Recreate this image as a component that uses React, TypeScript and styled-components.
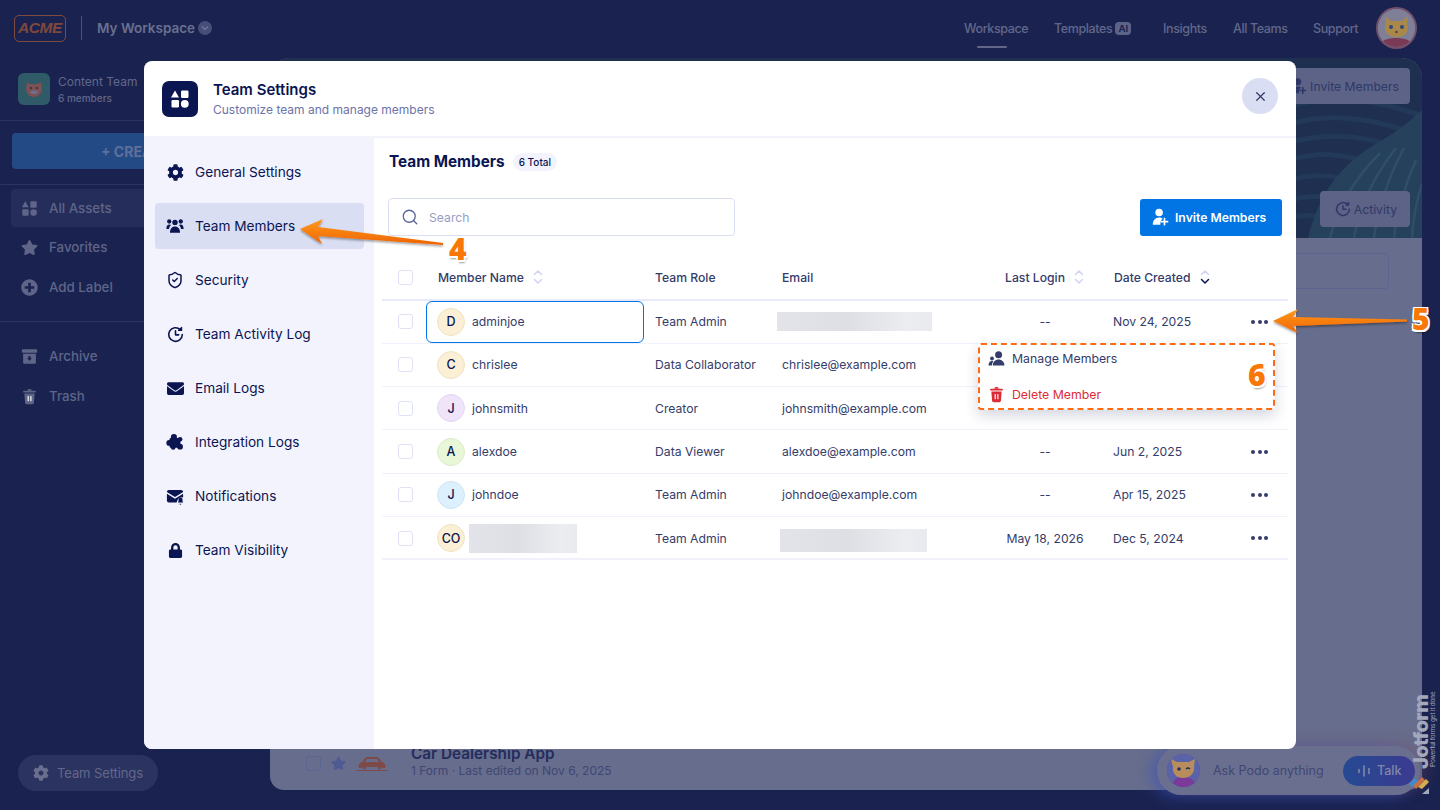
import React from "react";
import styled, { createGlobalStyle } from "styled-components";
import { FaCog, FaEnvelope, FaLock, FaStar, FaPlusCircle } from "react-icons/fa";
import { ShieldCheck, Search as SearchGlyph, X } from "lucide-react";

const Global = createGlobalStyle`
  html, body { margin: 0; padding: 0; height: 100%; background: #1a2350; overflow: hidden; }
  body { font-family: Inter, "Noto Sans", sans-serif; }
  * { box-sizing: border-box; }
`;

/* ---------- dimmed page ---------- */
const Page = styled.div`
  width: 1440px; height: 810px; display: flex; flex-direction: column; overflow: hidden; position: relative;
  background: #1a2350; color: #5f6588;
`;
const TopBar = styled.header`
  height: 58px; flex: none; display: flex; align-items: center; padding: 0 23px 2px 14px;
`;
const Logo = styled.div`
  width: 52px; height: 27px; border: 1.5px solid #7d4a3f; border-radius: 5px; display: flex; align-items: center; justify-content: center;
  color: #80483c; font: italic 900 15.5px "Liberation Sans", sans-serif; letter-spacing: -.4px;
`;
const Rule = styled.span`width: 1px; height: 24px; background: #4a5178; margin: 0 15px;`;
const Workspace = styled.div`font-size: 13.5px; font-weight: 600; color: #6a6f8f; display: flex; align-items: center; gap: 3px;`;
const Caret = styled.span`
  width: 14px; height: 14px; border-radius: 50%; background: #474e78; display: flex; align-items: center; justify-content: center;
`;
const Nav = styled.nav`margin-left: auto; display: flex; align-items: center; height: 56px;`;
const NavLink = styled.a<{ $w: number; $active?: boolean }>`
  width: ${p => p.$w}px; font-size: 12.5px; font-weight: 500; color: #62678a; letter-spacing: -.38px;
  display: flex; align-items: center; gap: 3px; height: 100%; position: relative;
  ${p => p.$active && `&::after{content:"";position:absolute;left:13px;top:46px;width:30px;height:2px;background:#62678a;border-radius:1px;}`}
`;
const AIBadge = styled.span`
  background: #5d6386; color: #1e2654; font-size: 9.5px; font-weight: 700; border-radius: 4px; padding: 1px 3px; line-height: 11px; letter-spacing: 0;
`;
const AvatarRing = styled.div`
  width: 41px; height: 42px; border-radius: 50%; background: #6a6f8f; overflow: hidden; border: 2px solid #75506a; margin-left: 2px;
`;
const Body = styled.div`flex: 1; display: flex; min-height: 0;`;
const Sidebar = styled.aside`width: 270px; flex: none; display: flex; flex-direction: column; padding-bottom: 19px;`;
const TeamCard = styled.div`
  height: 63px; border-bottom: 1px solid #2c3460; display: flex; align-items: flex-start; padding: 15px 18px 0; gap: 8px;
`;
const TeamThumb = styled.div`
  width: 32px; height: 32px; border-radius: 6px; background: #2f5a68; display: flex; align-items: center; justify-content: center;
`;
const TeamName = styled.div`font-size: 12px; line-height: 16px; color: #62678a; margin-top: 1px;`;
const TeamCount = styled.div`font-size: 10px; line-height: 14px; font-weight: 500; color: #62678a; margin-top: 1px;`;
const Create = styled.div`
  margin: 12px 12px 0; height: 36px; border-radius: 4px; background: #244a85; color: #5f6f9b; font-size: 14px; font-weight: 700;
  display: flex; align-items: center; justify-content: center;
`;
const SideRule = styled.div`height: 1px; background: #2c3460; margin-top: 15px;`;
const SideGroup = styled.div`padding: 4px 11px 0; display: flex; flex-direction: column;`;
const SideItem = styled.div<{ $active?: boolean; $h?: number }>`
  height: ${p => p.$h ?? 40}px; padding-left: 10px; display: flex; align-items: center; gap: 11px; font-size: 13.3px; font-weight: 500; color: #5f6588; border-radius: 4px;
  background: ${p => (p.$active ? "#252d5b" : "transparent")};
  svg { flex: none; }
`;
const SideGroupTwo = styled(SideGroup)`padding-top: 14px; border-top: 1px solid #2c3460; margin-top: 14px;`;
const Pill = styled.div`
  margin: auto 0 0 18px; width: 140px; height: 36px; border-radius: 18px; background: #2b3360; display: flex; align-items: center; gap: 8px; padding: 0 0 1px 15px;
  font-size: 13px; color: #62678a; letter-spacing: -.1px;
`;
const Main = styled.main`
  flex: 1; margin: 0 18px 20px 0; border-radius: 20px 20px 14px 14px; background: #676d8c; overflow: hidden; display: flex; flex-direction: column; position: relative;
`;
const Hero = styled.div`height: 180px; flex: none; position: relative; background: #1e2f50; overflow: hidden;`;
const HeroArt = styled.svg`position: absolute; inset: 0; width: 100%; height: 100%;`;
const GhostButton = styled.div<{ $w: number; $top: number; $pad: number }>`
  position: absolute; right: 12px; top: ${p => p.$top}px; width: ${p => p.$w}px; height: 36px; border-radius: 4px; background: #5c6386; white-space: nowrap;
  display: flex; align-items: center; justify-content: flex-end; gap: 3px; font-size: 12.2px; color: #2f3868; padding-right: ${p => p.$pad}px;
`;
const ListBar = styled.div`height: 66px; flex: none; padding: 15px 33px 0 0; display: flex; justify-content: flex-end;`;
const GhostInput = styled.div`width: 400px; height: 36px; border: 1px solid #5c6490; border-radius: 4px;`;
const BottomRow = styled.div`
  margin-top: auto; height: 50px; display: flex; align-items: center; padding: 0 0 4px 36px; gap: 10px;
`;
const GhostCheck = styled.span`width: 15px; height: 15px; border: 1px solid #5c6490; border-radius: 3px;`;
const AppInfo = styled.div`margin-left: 13px;`;
const AppTitle = styled.div`font-size: 15.3px; font-weight: 600; color: #232c5c; line-height: 15px;`;
const AppMeta = styled.div`font-size: 12px; color: #3f4774; line-height: 18px; margin-top: 1px;`;

const Podo = styled.div`
  position: absolute; left: 1157px; top: 746px; width: 263px; height: 49px; border-radius: 25px; background: #6a6f90;
  display: flex; align-items: center; padding-left: 10px;
  box-shadow: -6px 2px 14px rgba(60,80,190,.55), 8px -3px 14px rgba(140,80,90,.3);
`;
const PodoFace = styled.div`width: 33px; height: 33px; border-radius: 50%; background: #5a4aa0; overflow: hidden; flex: none;`;
const PodoText = styled.div`font-size: 12.5px; color: #404873; margin-left: 13px; width: 130px;`;
const Talk = styled.div`
  width: 72px; height: 30px; border-radius: 15px; background: linear-gradient(90deg,#254a92,#3c3a90); display: flex; align-items: center; gap: 7px; padding-left: 15px;
  font-size: 12.5px; font-weight: 500; color: #8088a8;
`;
const Brand = styled.div`
  position: absolute; left: 1408px; top: 690px; width: 30px; height: 105px;
`;
const BrandWord = styled.div`
  position: absolute; left: 5px; top: 79px; transform-origin: left top; transform: rotate(-90deg); font-size: 20px; font-weight: 800; letter-spacing: -.6px; color: #a3a8bb; white-space: nowrap; line-height: 17px;
`;
const BrandTag = styled.div`
  position: absolute; left: 21px; top: 77px; transform-origin: left top; transform: rotate(-90deg); font: 6.5px/8px "Liberation Sans", sans-serif; color: #a3a8bb; white-space: nowrap;
`;
const BrandMark = styled.svg`position: absolute; left: 0; top: 82px;`;

/* ---------- modal ---------- */
const Overlay = styled.div`position: absolute; inset: 0; display: flex; align-items: center; justify-content: center;`;
const Modal = styled.section`
  width: 1152px; height: 688px; background: #fff; border-radius: 8px; overflow: hidden; display: flex; flex-direction: column; color: #0a1551;
`;
const ModalHead = styled.div`
  height: 77px; flex: none; display: flex; align-items: center; padding: 0 18px 2px 18px; border-bottom: 2px solid #f3f3fb;
`;
const HeadIcon = styled.div`
  width: 36px; height: 36px; border-radius: 7px; background: #0a1551; display: flex; align-items: center; justify-content: center; margin: 2px 15px 0 0;
`;
const HeadText = styled.div`flex: 1; padding-top: 3px;`;
const HeadTitle = styled.div`font-size: 15px; font-weight: 600; line-height: 20px; color: #0a1551;`;
const HeadSub = styled.div`font-size: 12px; line-height: 18px; color: #6c73a8; margin-top: 1px;`;
const Close = styled.button`
  width: 36px; height: 36px; border-radius: 50%; border: 0; background: #dadef3; color: #343c6a; display: flex; align-items: center; justify-content: center; padding: 0; margin-bottom: 3px;
`;
const ModalBody = styled.div`flex: 1; display: flex; min-height: 0;`;
const Menu = styled.nav`width: 230px; flex: none; background: #f3f3fe; padding: 11px 10px 0 11px; display: flex; flex-direction: column;`;
const MenuItem = styled.div<{ $active?: boolean }>`
  height: 46px; margin-bottom: 8px; border-radius: 4px; display: flex; align-items: center; padding-left: 11px; gap: 11px;
  font-size: 13.65px; color: #0a1551;
  background: ${p => (p.$active ? "#dadef3" : "transparent")};
`;
const MenuIcon = styled.span`width: 18px; height: 18px; display: flex; align-items: center; justify-content: center; flex: none; color: #0a1551;`;
const Content = styled.div`flex: 1; padding: 0 8px; display: flex; flex-direction: column; min-width: 0;`;
const TitleRow = styled.div`height: 48px; padding: 0 0 1px 7px; display: flex; align-items: center; gap: 8px;`;
const ContentTitle = styled.h2`margin: 0; font-size: 15.3px; font-weight: 700; color: #0a1551;`;
const TotalBadge = styled.span`
  height: 18px; padding: 0 6px; border-radius: 9px; background: #f3f3fe; font-size: 10px; font-weight: 500; color: #0a1551; display: flex; align-items: center;
`;
const Toolbar = styled.div`height: 38px; margin-top: 12px; padding: 0 6px; display: flex; justify-content: space-between; align-items: center;`;
const SearchBox = styled.div`
  width: 347px; height: 38px; border: 1px solid #dadef3; border-radius: 4px; display: flex; align-items: center; padding-left: 12px; gap: 10px;
  font-size: 12.2px; color: #979dc6;
`;
const InviteButton = styled.button`
  width: 142px; height: 37px; border: 0; border-radius: 3px; background: #0075e3; color: #fff; display: flex; align-items: center; padding-left: 11px; gap: 6px;
  font: 600 12.2px Inter, sans-serif;
`;
const Table = styled.div`margin-top: 22px; display: flex; flex-direction: column; position: relative;`;
const columns = "44px 218px 127px 213px 122px 130px 52px";
const HeadRow = styled.div`
  display: grid; grid-template-columns: ${columns}; height: 42.5px; padding-bottom: 2px; align-items: center; border-bottom: 2px solid #e8eafb; font-size: 12.2px; font-weight: 500; color: #343c6a;
`;
const Row = styled.div`
  display: grid; grid-template-columns: ${columns}; height: 43.33px; align-items: center; border-bottom: 1px solid #f0f1fb; font-size: 12.2px; color: #343c6a;
  &:nth-child(7) { border-bottom-width: 2px; }
`;
const CheckCell = styled.div`padding-left: 16px; display: flex;`;
const Check = styled.span`width: 15px; height: 15px; border: 1.5px solid #dfe1f6; border-radius: 3px; display: block;`;
const HeadCell = styled.div<{ $pad?: number }>`padding-left: ${p => p.$pad ?? 0}px; display: flex; align-items: center; gap: 9px;`;
const NameCell = styled.div<{ $focus?: boolean }>`
  height: 42px; display: flex; align-items: center; padding-left: 10px; gap: 7px; border-radius: 6px;
  border: 1px solid ${p => (p.$focus ? "#0075e3" : "transparent")}; color: #343c6a;
`;
const Avatar = styled.span<{ $bg: string; $edge: string }>`
  width: 28px; height: 28px; border-radius: 50%; background: ${p => p.$bg}; border: 1px solid ${p => p.$edge}; color: #0a1551; flex: none;
  display: flex; align-items: center; justify-content: center; font-size: 12.5px; font-weight: 500;
`;
const Cell = styled.div<{ $pad?: number }>`padding-left: ${p => p.$pad ?? 0}px;`;
const CenterCell = styled.div`text-align: center; color: #343c6a;`;
const Blur = styled.span<{ $w: number; $h: number; $shift?: number; $drop?: number }>`
  display: block; width: ${p => p.$w}px; height: ${p => p.$h}px; margin-left: ${p => p.$shift ?? 0}px; margin-top: ${p => p.$drop ?? 0}px;
  background: linear-gradient(90deg,#e3e4e9,#dedfe4 45%,#ecedf1 85%,#e9eaef);
`;
const Dots = styled.div`padding-left: 15px; display: flex; gap: 2.5px; span{width:4px;height:4px;border-radius:50%;background:#343c6a;display:block;}`;
const Dropdown = styled.div`
  position: absolute; left: 596px; top: 85px; width: 297px; height: 67px; background: #fff; border: 2px dashed #ff6a13; border-radius: 3px;
  box-shadow: 0 6px 14px rgba(30,40,90,.18); display: flex; flex-direction: column; padding: 0 8px;
`;
const DropItem = styled.div<{ $danger?: boolean }>`
  height: 36px; flex: none; display: flex; align-items: center; gap: 7px; font-size: 12.3px; color: ${p => (p.$danger ? "#dc2b35" : "#343c6a")};
  &:first-child { margin-top: -5px; }
`;

/* ---------- annotations ---------- */
const Marks = styled.svg`position: absolute; inset: 0; width: 1440px; height: 810px; pointer-events: none;`;
const Step = styled.div<{ $x: number; $y: number }>`
  position: absolute; left: ${p => p.$x}px; top: ${p => p.$y}px; color: #f97706; font: 800 30px/28px "Open Sans", sans-serif;
  text-shadow: 0 0 1px #fff, 1.5px 1.5px 0 #fff, -1.5px -1.5px 0 #fff, 1.5px -1.5px 0 #fff, -1.5px 1.5px 0 #fff, 1px 2.5px 2px rgba(0,0,0,.4);
`;

/* ---------- drawings ---------- */
const Shapes = ({ size, color }: { size: number; color: string }) => (
  <svg width={size} height={size} viewBox="0 0 20 20" fill={color}>
    <path d="M5 1.5 9 8.5H1z" />
    <rect x="11" y="1.5" width="7.5" height="7.5" rx="1.2" />
    <rect x="1.5" y="11" width="7.5" height="7.5" rx="1.2" />
    <circle cx="14.8" cy="14.8" r="3.9" />
  </svg>
);
const ClockBack = ({ size, color }: { size: number; color: string }) => (
  <svg width={size} height={size} viewBox="0 0 20 20" fill="none" stroke={color} strokeWidth="1.9" strokeLinecap="round" strokeLinejoin="round">
    <path d="M18 10a8 8 0 1 1-2.4-5.7" />
    <path d="M17.2 1.6v3.6h-3.6z" fill={color} strokeWidth="1.4" />
    <path d="M10 5.8v4.6h3.8" />
  </svg>
);
const Trash = ({ color, size }: { color: string; size: number }) => (
  <svg width={size} height={size} viewBox="0 0 20 20" fill={color}>
    <rect x="2.5" y="3.2" width="15" height="2.2" rx="1" />
    <path d="M7.5 3.2C7.5 1.8 8.4 1.2 10 1.2s2.5.6 2.5 2z" />
    <path d="M4 6.4h12l-.8 11c-.1 1-.8 1.6-1.7 1.6h-7c-.9 0-1.6-.6-1.7-1.6z" />
    <rect x="7.7" y="9.5" width="1.6" height="6" fill="#fff" opacity=".85" />
    <rect x="10.8" y="9.5" width="1.6" height="6" fill="#fff" opacity=".85" />
  </svg>
);
const Archive = () => (
  <svg width="17" height="17" viewBox="0 0 20 20" fill="#5f6588">
    <rect x="1" y="1.5" width="18" height="4" rx="1" />
    <path d="M2.5 6.8h15V17a1.5 1.5 0 0 1-1.5 1.5H4A1.5 1.5 0 0 1 2.5 17z" />
    <path d="M8.8 9.5h2.4v2.5H13l-3 3-3-3h1.8z" fill="#1a2350" />
  </svg>
);
const PersonPlus = ({ color }: { color: string }) => (
  <svg width="18" height="18" viewBox="0 0 20 20" fill={color}>
    <circle cx="9" cy="5" r="4.2" />
    <path d="M2 18.6c0-4.8 2.8-8 7-8 1.6 0 3 .5 4 1.3-1.6.8-2.6 2.6-2.6 6.7z" />
    <path d="M15 11.8v6.8M11.8 15.2h6.6" stroke={color} strokeWidth="1.9" strokeLinecap="round" />
  </svg>
);
const Notify = () => (
  <svg width="18" height="18" viewBox="0 0 20 20" fill="#0a1551">
    <path d="M1 5.5C1 4 2 3.2 3.2 3.2h13.6C18 3.2 19 4 19 5.5L10 11z" />
    <path d="M1 7.6l9 5.4 9-5.4v4.2a5 5 0 0 0-6.4 3.2c-.4 1-.4 1.6-.9 2.2H3.2C2 17.2 1 16.2 1 15z" />
    <path d="M16 11.8c1.6 0 2.4 1.1 2.4 2.5v1.8l.9 1H13l.9-1v-1.9c0-1.4.7-2.4 2.1-2.4zM15 18.6h2c0 .6-.4 1-1 1s-1-.4-1-1z" />
  </svg>
);
const Group = () => (
  <svg width="18" height="18" viewBox="0 0 20 20" fill="#0a1551">
    <circle cx="10" cy="6" r="3" />
    <circle cx="3.6" cy="5" r="2.4" />
    <circle cx="16.4" cy="5" r="2.4" />
    <path d="M4.4 17.6c0-4.4 2.1-7 5.6-7s5.6 2.6 5.6 7z" />
    <path d="M.4 13.4c0-3 1-5 3.3-5 .8 0 1.4.2 1.9.6-1.3 1-2 2.6-2.3 4.4z" />
    <path d="M19.6 13.4c0-3-1-5-3.3-5-.8 0-1.4.2-1.9.6 1.3 1 2 2.6 2.3 4.4z" />
  </svg>
);
const Puzzle = () => (
  <svg width="18" height="18" viewBox="0 0 20 20" fill="#0a1551">
    <rect x="4" y="5.5" width="12" height="11" rx="1.5" />
    <circle cx="8.8" cy="4.4" r="3.4" />
    <circle cx="3.6" cy="11" r="3.2" />
    <circle cx="15.6" cy="7" r="2.6" />
    <circle cx="15.6" cy="15.2" r="3.2" />
    <circle cx="8" cy="16" r="2.6" />
  </svg>
);
const TwoPeople = () => (
  <svg width="17" height="15" viewBox="0 0 20 18" fill="#343c6a">
    <circle cx="12.5" cy="4.4" r="4.2" />
    <path d="M5.5 17.5c0-4.4 3-7.3 7-7.3s7 2.9 7 7.3z" />
    <circle cx="4.6" cy="9" r="2.3" />
    <path d="M.4 17.5c0-3 1.5-5.4 4.2-5.4.7 0 1.2.1 1.6.4-1 1.3-1.7 3-1.7 5z" />
  </svg>
);
const Sort = ({ down }: { down?: boolean }) => (
  <svg width="10" height="16" viewBox="0 0 10 16" fill="none" strokeWidth="1.5" strokeLinecap="round" strokeLinejoin="round">
    <path d="M1.5 5.5 5 2l3.5 3.5" stroke="#cfd3f2" />
    <path d="M1.5 10.5 5 14l3.5-3.5" stroke={down ? "#0a1551" : "#cfd3f2"} />
  </svg>
);
const Tiger = () => (
  <svg width="20" height="20" viewBox="0 0 20 20">
    <path d="M3 3l3 2h8l3-2 1 7c0 4-3 8-8 8s-8-4-8-8z" fill="#7b5153" />
    <path d="M6 13c1-2 7-2 8 0-1 3-7 3-8 0z" fill="#6d6f8e" />
    <circle cx="7" cy="9" r="1" fill="#2b2b45" /><circle cx="13" cy="9" r="1" fill="#2b2b45" />
  </svg>
);
const CatFace = () => (
  <svg width="37" height="38" viewBox="2 2 37 38">
    <rect width="41" height="42" fill="#7f8098" />
    <path d="M3 42c1-9 8-11 17-11s17 2 18 11z" fill="#7a3a55" />
    <path d="M9 9l6 5h11l6-5-1 9c2 3 1 12-10.500 12S8 21 10 18z" fill="#a8894a" />
    <circle cx="15" cy="20" r="2" fill="#36457a" /><circle cx="26" cy="20" r="2" fill="#36457a" />
    <circle cx="20.500" cy="25" r="1.300" fill="#6b3a3a" />
  </svg>
);
const PodoCat = () => (
  <svg width="33" height="33" viewBox="0 0 33 33">
    <rect width="33" height="33" fill="#5a62a8" />
    <path d="M5 33c1-8 5-10 11-10s12 2 13 10z" fill="#7a3a9a" />
    <path d="M4 5l6 3h12l6-3-1 8c1 6-4 11-11 11S5 19 6 13z" fill="#b78d5d" />
    <circle cx="12" cy="15" r="1.800" fill="#27305c" />
    <path d="M19 15q2-2 4 0" stroke="#27305c" strokeWidth="1.200" fill="none" />
  </svg>
);

const menu: { label: string; icon: React.ReactNode; active?: boolean }[] = [
  { label: "General Settings", icon: <FaCog size={17} /> },
  { label: "Team Members", icon: <Group />, active: true },
  { label: "Security", icon: <ShieldCheck size={18} strokeWidth={2} /> },
  { label: "Team Activity Log", icon: <ClockBack size={17} color="#0a1551" /> },
  { label: "Email Logs", icon: <FaEnvelope size={17} /> },
  { label: "Integration Logs", icon: <Puzzle /> },
  { label: "Notifications", icon: <Notify /> },
  { label: "Team Visibility", icon: <FaLock size={15} /> },
];

type Member = {
  initial: string; bg: string; edge: string; name?: string; role: string; email?: string;
  login?: string; date?: string; nameBlur?: boolean; focus?: boolean; emailBlur?: number; dots?: boolean;
};
const sand = ["#fbf0d5", "#efe3c4"];
const members: Member[] = [
  { initial: "D", bg: sand[0], edge: sand[1], name: "adminjoe", role: "Team Admin", focus: true, emailBlur: 1, login: "--", date: "Nov 24, 2025", dots: true },
  { initial: "C", bg: sand[0], edge: sand[1], name: "chrislee", role: "Data Collaborator", email: "chrislee@example.com" },
  { initial: "J", bg: "#f0e4fb", edge: "#e3d7f0", name: "johnsmith", role: "Creator", email: "johnsmith@example.com" },
  { initial: "A", bg: "#e9f7d9", edge: "#dcebca", name: "alexdoe", role: "Data Viewer", email: "alexdoe@example.com", login: "--", date: "Jun 2, 2025", dots: true },
  { initial: "J", bg: "#dcf0fd", edge: "#cfe4f2", name: "johndoe", role: "Team Admin", email: "johndoe@example.com", login: "--", date: "Apr 15, 2025", dots: true },
  { initial: "CO", bg: sand[0], edge: sand[1], nameBlur: true, role: "Team Admin", emailBlur: 2, login: "May 18, 2026", date: "Dec 5, 2024", dots: true },
];

export default function App() {
  return (
    <Page>
      <Global />
      <TopBar>
        <Logo>ACME</Logo>
        <Rule />
        <Workspace>
          My Workspace
          <Caret>
            <svg width="8" height="6" viewBox="0 0 8 6" fill="none" stroke="#6f759a" strokeWidth="1.5"><path d="M1 1.5l3 3 3-3" /></svg>
          </Caret>
        </Workspace>
        <Nav>
          <NavLink $w={90} $active>Workspace</NavLink>
          <NavLink $w={109}>Templates <AIBadge>AI</AIBadge></NavLink>
          <NavLink $w={70}>Insights</NavLink>
          <NavLink $w={80}>All Teams</NavLink>
          <NavLink $w={61}>Support</NavLink>
        </Nav>
        <AvatarRing><CatFace /></AvatarRing>
      </TopBar>
      <Body>
        <Sidebar>
          <TeamCard>
            <TeamThumb><Tiger /></TeamThumb>
            <div>
              <TeamName>Content Team</TeamName>
              <TeamCount>6 members</TeamCount>
            </div>
          </TeamCard>
          <Create>+ CREATE</Create>
          <SideRule />
          <SideGroup>
            <SideItem $active $h={38}><Shapes size={17} color="#5f6588" />All Assets</SideItem>
            <SideItem $h={40}><FaStar size={17} color="#5f6588" />Favorites</SideItem>
            <SideItem $h={40}><FaPlusCircle size={17} color="#5f6588" />Add Label</SideItem>
          </SideGroup>
          <SideGroupTwo>
            <SideItem><Archive />Archive</SideItem>
            <SideItem><Trash color="#5f6588" size={17} />Trash</SideItem>
          </SideGroupTwo>
          <Pill><FaCog size={16} color="#6a6f8f" />Team Settings</Pill>
        </Sidebar>
        <Main>
          <Hero>
            <HeroArt viewBox="0 0 1152 180" preserveAspectRatio="none">
              <g fill="none" stroke="#23395a" strokeWidth="5">
                <path d="M1020 48c40-12 90-6 132 10" />
                <path d="M1020 66c40-12 80-6 120 8" />
                <path d="M1020 84c40-10 70-6 100 3" />
                <path d="M1020 102c30-9 50-6 78 2" />
                <path d="M1020 122c22-6 40-5 62 0" />
                <path d="M1020 142c20-5 34-4 50 0" />
                <path d="M1020 160c14-4 24-3 36 0" />
              </g>
              <path d="M1038 180c6-26 18-50 32-65 14-16 30-26 47-36 14-8 24-17 35-27v128z" fill="#26415c" />
              <g fill="none" stroke="#2f4f68" strokeWidth="2.500">
                <path d="M1060 180c8-32 25-60 50-85" />
                <path d="M1084 180c6-34 20-62 42-90" />
                <path d="M1104 180c4-30 14-60 30-90" />
                <path d="M1124 180c3-26 10-50 22-78" />
                <path d="M1142 180c1-20 4-36 10-54" />
              </g>
            </HeroArt>
            <GhostButton $w={120} $top={10} $pad={11}><PersonPlus color="#2f3868" />Invite Members</GhostButton>
            <GhostButton $w={90} $top={133} $pad={13}><ClockBack size={16} color="#2f3868" />Activity</GhostButton>
          </Hero>
          <ListBar><GhostInput /></ListBar>
          <BottomRow>
            <GhostCheck />
            <FaStar size={15} color="#4d5a94" />
            <svg width="32" height="16" viewBox="0 0 32 16" fill="#7d4a48">
              <path d="M3 13c-1-3 0-5 3-6l4-5h12l4 5c3 1 4 3 3 6h-3a3 3 0 0 0-5-1H11a3 3 0 0 0-5 1z" />
              <path d="M11 4h10l2 3H9z" fill="#676d8c" />
              <circle cx="8.500" cy="12.500" r="1.800" /><circle cx="23.500" cy="12.500" r="1.800" />
              <rect y="15" width="32" height="1" />
            </svg>
            <AppInfo>
              <AppTitle>Car Dealership App</AppTitle>
              <AppMeta>1 Form · Last edited on Nov 6, 2025</AppMeta>
            </AppInfo>
          </BottomRow>
        </Main>
      </Body>

      <Podo>
        <PodoFace><PodoCat /></PodoFace>
        <PodoText>Ask Podo anything</PodoText>
        <Talk>
          <svg width="12" height="12" viewBox="0 0 12 12" stroke="#8088a8" strokeWidth="1.600" strokeLinecap="round"><path d="M1 4.500v3M6 1v10M11 3.500v5" /></svg>
          Talk
        </Talk>
      </Podo>
      <Brand>
        <BrandWord>Jotform</BrandWord>
        <BrandTag>Powerful forms get it done</BrandTag>
        <BrandMark width="22" height="24" viewBox="0 0 22 24">
          <path d="M1 12l6-6 3 3-6 6z" fill="#3f8ad0" />
          <path d="M5 14l9-9 3 3-9 9z" fill="#c76f42" />
          <path d="M10 15l8-8 3 3-7 7z" fill="#d6ad50" />
          <path d="M14 22h7v-6z" fill="#a3a8bb" />
        </BrandMark>
      </Brand>

      <Overlay>
        <Modal>
          <ModalHead>
            <HeadIcon><Shapes size={20} color="#fff" /></HeadIcon>
            <HeadText>
              <HeadTitle>Team Settings</HeadTitle>
              <HeadSub>Customize team and manage members</HeadSub>
            </HeadText>
            <Close aria-label="Close"><X size={15} strokeWidth={2} /></Close>
          </ModalHead>
          <ModalBody>
            <Menu>
              {menu.map(m => (
                <MenuItem key={m.label} $active={m.active}>
                  <MenuIcon>{m.icon}</MenuIcon>
                  {m.label}
                </MenuItem>
              ))}
            </Menu>
            <Content>
              <TitleRow>
                <ContentTitle>Team Members</ContentTitle>
                <TotalBadge>6 Total</TotalBadge>
              </TitleRow>
              <Toolbar>
                <SearchBox><SearchGlyph size={18} color="#5b6399" strokeWidth={1.700} />Search</SearchBox>
                <InviteButton><PersonPlus color="#fff" />Invite Members</InviteButton>
              </Toolbar>
              <Table>
                <HeadRow>
                  <CheckCell><Check /></CheckCell>
                  <HeadCell $pad={12}>Member Name <Sort /></HeadCell>
                  <HeadCell $pad={11}>Team Role</HeadCell>
                  <HeadCell $pad={11}>Email</HeadCell>
                  <HeadCell $pad={21}>Last Login <Sort /></HeadCell>
                  <HeadCell $pad={8}>Date Created <Sort down /></HeadCell>
                  <div />
                </HeadRow>
                {members.map((m, i) => (
                  <Row key={i}>
                    <CheckCell><Check /></CheckCell>
                    <NameCell $focus={m.focus}>
                      <Avatar $bg={m.bg} $edge={m.edge}>{m.initial}</Avatar>
                      {m.nameBlur ? <Blur $w={108} $h={29} $shift={-3} /> : m.name}
                    </NameCell>
                    <Cell $pad={11}>{m.role}</Cell>
                    {m.emailBlur === 1 && <Cell $pad={6}><Blur $w={155} $h={19} /></Cell>}
                    {m.emailBlur === 2 && <Cell $pad={9}><Blur $w={147} $h={23} $drop={4} /></Cell>}
                    {!m.emailBlur && <Cell $pad={11}>{m.email}</Cell>}
                    <CenterCell>{m.login}</CenterCell>
                    <Cell $pad={7}>{m.date}</Cell>
                    {m.dots ? <Dots><span /><span /><span /></Dots> : <div />}
                  </Row>
                ))}
                <Dropdown>
                  <DropItem><TwoPeople />Manage Members</DropItem>
                  <DropItem $danger><Trash color="#dc2b35" size={17} />Delete Member</DropItem>
                </Dropdown>
              </Table>
            </Content>
          </ModalBody>
        </Modal>
      </Overlay>

      <Marks viewBox="0 0 1440 810">
        <defs>
          <linearGradient id="arrow" x1="0" y1="0" x2="0" y2="1">
            <stop offset="0" stopColor="#ff9a1f" />
            <stop offset="1" stopColor="#ef6400" />
          </linearGradient>
          <filter id="drop" x="-10%" y="-50%" width="120%" height="220%">
            <feDropShadow dx="0" dy="1.500" stdDeviation="1.200" floodColor="#000" floodOpacity=".4" />
          </filter>
        </defs>
        <path d="M300 229 323 219 318 227 443 243 443 245 318 236 322 244z" fill="url(#arrow)" filter="url(#drop)" />
        <path d="M1273 321 1298 309 1293 317 1407 319.500 1407 321.500 1293 326 1298 333z" fill="url(#arrow)" filter="url(#drop)" />
      </Marks>
      <Step $x={449} $y={235}>4</Step>
      <Step $x={1412} $y={305}>5</Step>
      <Step $x={1248} $y={361}>6</Step>
    </Page>
  );
}
